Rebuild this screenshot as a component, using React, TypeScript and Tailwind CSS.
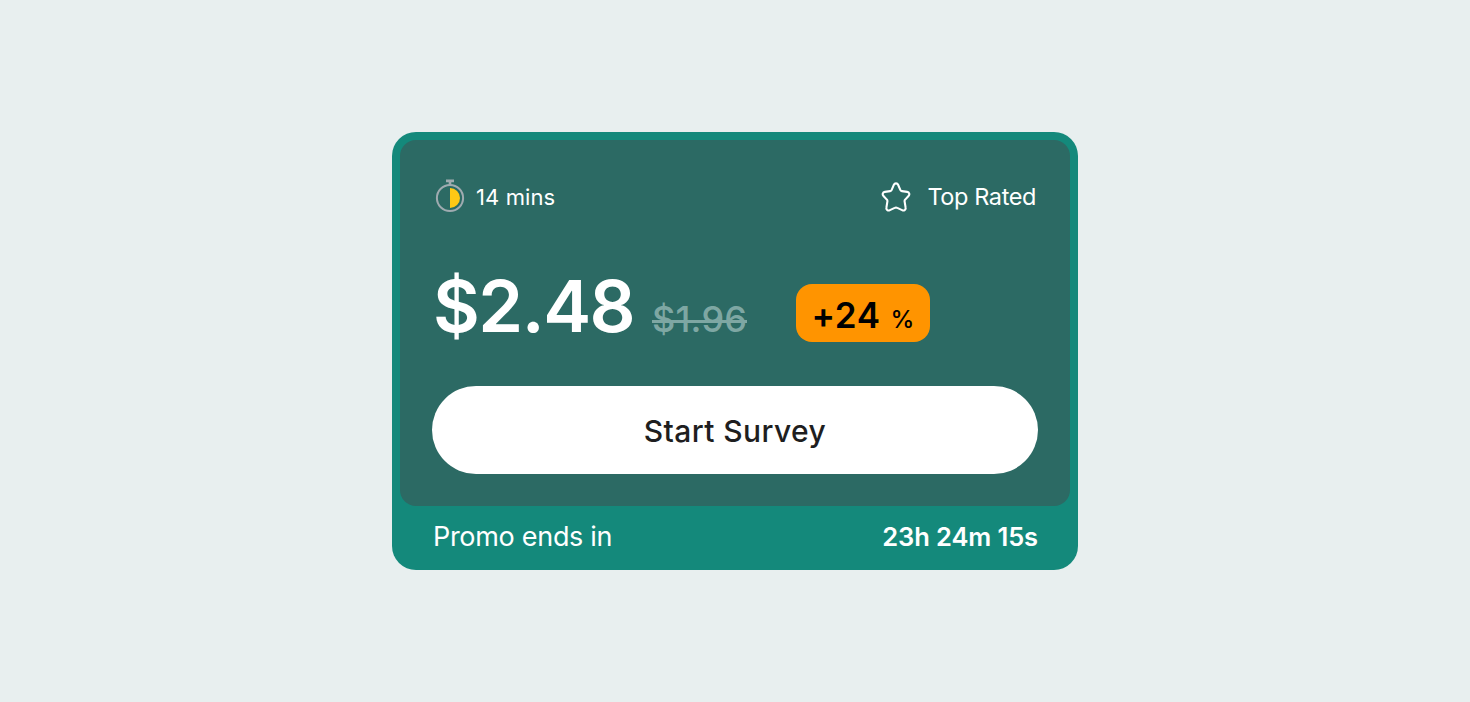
function StopwatchIcon() {
  return (
    <svg width="32" height="34" viewBox="0 0 32 34" fill="none">
      <circle cx="16" cy="19" r="13.1" stroke="#9FABB0" strokeWidth="2" />
      <path d="M12 1.9h8M16 2v4" stroke="#9FABB0" strokeWidth="2.6" />
      <path d="M16 9a10 10 0 0 1 0 20z" fill="#FFC815" />
    </svg>
  );
}

function StarIcon() {
  return (
    <svg className="mt-px" width="30" height="30" viewBox="1 1 30 30" fill="none">
      <path
        d="M13.9 3.7C14.7 1.9 17.3 1.9 18.1 3.7L20.3 8.9C20.6 9.6 21.2 10 21.9 10.1L27.2 10.9C29.3 11.2 30 13.5 28.5 15L25.2 18.6C24.7 19.1 24.5 19.7 24.6 20.4L25.6 26.7C26 28.9 24 30.1 22.1 29.1L17.3 26.9C16.5 26.5 15.5 26.5 14.7 26.9L9.9 29.1C8 30.1 6 28.9 6.4 26.7L7.4 20.4C7.5 19.7 7.3 19.1 6.8 18.6L3.5 15C2 13.5 2.7 11.2 4.8 10.9L10.1 10.1C10.8 10 11.4 9.6 11.7 8.9Z"
        stroke="white"
        strokeWidth="2.1"
        strokeLinejoin="round"
      />
    </svg>
  );
}

function SurveyCard() {
  return (
    <div className="w-[686px] h-[438px] rounded-3xl bg-[#14897B] p-2 text-white">
      <div className="h-[366px] rounded-2xl bg-[#2C6A64] px-8 pt-8">
        <div className="flex h-12 items-center justify-between">
          <div className="flex items-center">
            <span className="ml-0.5">
              <StopwatchIcon />
            </span>
            <span className="ml-2.5 pt-0.5 text-[22px] leading-8 tracking-[0.1px]">14 mins</span>
          </div>
          <div className="flex items-center pr-0.5">
            <StarIcon />
            <span className="ml-4 pt-0.5 text-[23.5px] leading-8 tracking-[-0.4px]">Top Rated</span>
          </div>
        </div>

        <div className="mt-[42px] flex h-[88px] items-baseline whitespace-nowrap">
          <span className="w-[220px] pl-px text-[72px] leading-[88px] font-semibold tracking-[-1.5px]">$2.48</span>
          <span className="relative w-[144px] text-[36px] font-medium tracking-[0.2px] text-[#7EA7A3]">
            $1.96
            <span className="absolute top-7 left-0 h-[3px] w-[95px] bg-[#7EA7A3]" />
          </span>
          <span className="mt-[22px] flex h-[58px] w-[134px] items-baseline justify-center self-start rounded-2xl bg-[#FF9400] leading-[63px] text-black">
            <span className="text-[35px] font-semibold tracking-[0.6px]">+24</span>
            <span className="ml-2.5 text-2xl font-medium">%</span>
          </span>
        </div>

        <button className="mt-9 h-[88px] w-full rounded-full bg-white pt-0.5 text-[30px] font-medium tracking-[0.4px] text-[#1E1E20]">
          Start Survey
        </button>
      </div>

      <div className="flex h-[62px] items-center justify-between pl-[33px] pr-8">
        <span className="text-[27px] tracking-[-0.3px]">Promo ends in</span>
        <span className="text-[25.5px] font-semibold tracking-[-0.1px]">23h 24m 15s</span>
      </div>
    </div>
  );
}

export default function App() {
  return (
    <div className="flex h-screen w-full items-center justify-center bg-[#E8EFEF] font-['Inter',sans-serif]">
      <SurveyCard />
    </div>
  );
}
